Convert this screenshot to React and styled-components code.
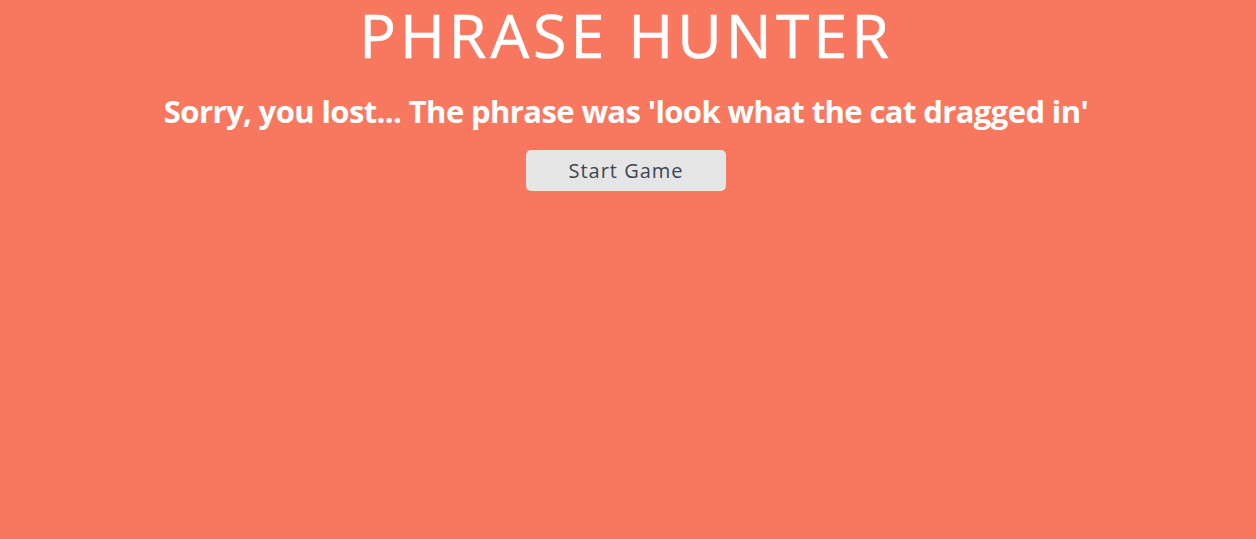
import React from 'react'
import styled, { createGlobalStyle } from 'styled-components'

const GlobalStyle = createGlobalStyle`
  html, body {
    margin: 0;
    padding: 0;
    background: #f7785f;
  }
  body {
    font-family: "Open Sans", "DejaVu Sans", sans-serif;
  }
`

const Overlay = styled.div`
  min-height: 539px;
  padding-right: 4px;
  background: #f7785f;
  display: flex;
  flex-direction: column;
  align-items: center;
  color: #fff;
`

const Title = styled.h2`
  margin: 0;
  font-size: 61px;
  font-weight: 400;
  line-height: 70px;
  letter-spacing: 4px;
  text-transform: uppercase;
  -webkit-text-stroke: 0.6px #fff;
`

const Message = styled.h1`
  margin: 21px 0 0;
  font-size: 31px;
  font-weight: 700;
  line-height: 40px;
  letter-spacing: -0.6px;
`

const StartButton = styled.button`
  margin-top: 19px;
  width: 200px;
  height: 41px;
  border: none;
  border-radius: 5px;
  background: #e5e5e5;
  color: #3a4753;
  font-family: inherit;
  font-size: 20px;
  letter-spacing: 1px;
  cursor: pointer;
`

export default function App() {
  return (
    <>
      <GlobalStyle />
      <Overlay>
        <Title>Phrase Hunter</Title>
        <Message>Sorry, you lost... The phrase was 'look what the cat dragged in'</Message>
        <StartButton>Start Game</StartButton>
      </Overlay>
    </>
  )
}
